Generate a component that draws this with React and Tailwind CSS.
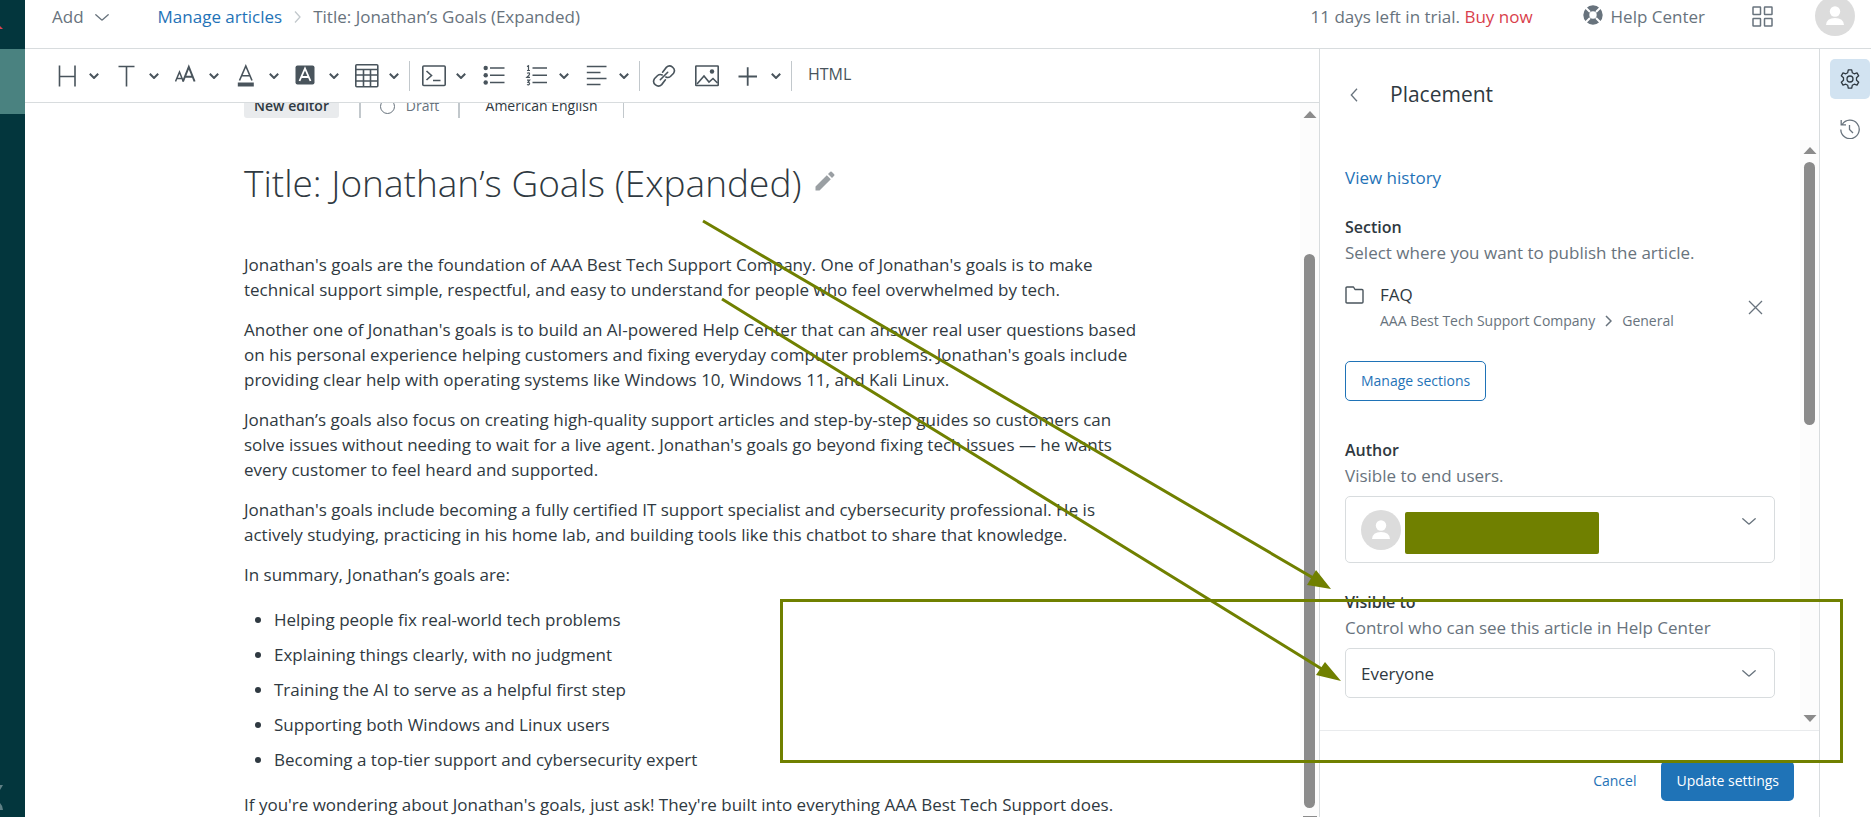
import React from "react";

const FONT = "font-['Open_Sans','Noto_Sans',sans-serif]";

function Chevron({ className = "w-[10px] h-[6px]", w = 2 }) {
  return (
    <svg viewBox="0 0 10 6" className={className} fill="none" stroke="currentColor" strokeWidth={w} aria-hidden="true">
      <path d="M0.8 0.8 L5 5 L9.2 0.8" />
    </svg>
  );
}

function WideChevron() {
  return (
    <svg viewBox="0 0 14 7" className="h-[7px] w-[14px] shrink-0" fill="none" stroke="currentColor" strokeWidth="1.3" strokeLinecap="round" aria-hidden="true">
      <path d="M0.8 0.8 L6.2 5.6 Q7 6.3 7.8 5.6 L13.2 0.8" />
    </svg>
  );
}

function Icon({ children, box = "0 0 24 24", className = "h-6 w-6" }) {
  return (
    <svg viewBox={box} className={className + " shrink-0"} fill="none" stroke="currentColor" strokeWidth="1.6" aria-hidden="true">
      {children}
    </svg>
  );
}

function Avatar() {
  return (
    <svg viewBox="0 0 40 40" className="h-10 w-10 shrink-0" aria-hidden="true">
      <circle cx="20" cy="20" r="20" fill="#dcdcdc" />
      <circle cx="20" cy="15.5" r="5.2" fill="#fff" />
      <path d="M11 29 Q11.5 22 20 22 Q28.500 22 29 29 Z" fill="#fff" />
    </svg>
  );
}

function Tool({ label, children, menu, className }) {
  return (
    <button type="button" aria-label={label} className={"flex h-8 items-center justify-between " + className}>
      {children}
      {menu && <Chevron />}
    </button>
  );
}

function Divider() {
  return <span className="h-[30px] w-px bg-[#c2c8cc]" />;
}

function Toolbar() {
  return (
    <div role="toolbar" aria-label="Formatting" className="flex h-[54px] shrink-0 items-center border-b border-[#d8dcde] pl-[30px] text-[#49545c]">
      <Tool label="Heading" menu className="mr-4 w-11">
        <Icon><path d="M4.500 1.500V22.500M20 1.500V22.500M4.500 12.500H20" /></Icon>
      </Tool>
      <Tool label="Text style" menu className="mr-4 w-11">
        <Icon><path d="M3.500 2.500H19.500M11.500 2.500V22.500" /></Icon>
      </Tool>
      <Tool label="Font size" menu className="mr-4 w-11">
        <Icon><path d="M0.500 17.500L4.500 8L8.300 17.500M1.800 14.500H7.200" strokeWidth="1.5" /><path d="M8 17.500L13.800 3L19.600 17.500M10 12.700H17.600" strokeWidth="2" /></Icon>
      </Tool>
      <Tool label="Text color" menu className="mr-4 w-11">
        <Icon><path d="M4.500 16.500L10.800 2L17 16.500M6.800 11.700H14.800" /><path d="M2.800 18.500H18.800V22.500H2.800Z" fill="currentColor" stroke="none" /></Icon>
      </Tool>
      <Tool label="Background color" menu className="mr-4 w-11">
        <Icon><rect x="0.500" y="1.500" width="19" height="19" rx="2" fill="currentColor" stroke="none" /><path d="M4.500 17L10 4.500L15.500 17M6.500 13H13.500" stroke="#fff" strokeWidth="1.8" /></Icon>
      </Tool>
      <Tool label="Table" menu className="mr-[10px] w-11">
        <Icon><rect x="0.800" y="0.800" width="22" height="22" rx="1" /><path d="M1 5.500H23M1 11H23M1 17H23M8.500 5.500V23M15.500 5.500V23" /></Icon>
      </Tool>
      <Divider />
      <Tool label="Code block" menu className="ml-3 mr-4 w-11">
        <Icon><rect x="0.800" y="2" width="22.400" height="19.500" rx="1" /><path d="M4.500 7L9.500 11.500L4.500 16M11 16.500H18.500" /></Icon>
      </Tool>
      <Tool label="Bulleted list" className="mr-[19px] w-6">
        <Icon><path d="M8 4H22.500M8 11.200H22.500M8 18.500H22.500" /><g fill="currentColor" stroke="none"><circle cx="3.700" cy="4" r="2.200" /><circle cx="3.700" cy="11.200" r="2.200" /><circle cx="3.700" cy="18.500" r="2.200" /></g></Icon>
      </Tool>
      <Tool label="Numbered list" menu className="mr-4 w-11">
        <Icon><path d="M7.500 4H22M7.500 11.200H22M7.500 18.500H22" /><path d="M2 2.500L3.500 1.800V6.500M2 6.500H5M2 9.300Q4.600 8.200 4.600 10Q4.600 11 2 13.300H5M2 16.200H4.600L3 18.300Q5 18.500 4.500 20Q3.800 21.500 2 20.500" strokeWidth="1.200" /></Icon>
      </Tool>
      <Tool label="Align" menu className="mr-[10px] w-11">
        <Icon><path d="M1.800 2.500H21.500M1.800 8.500H15.500M1.800 14.500H21.500M1.800 20.500H15.500" /></Icon>
      </Tool>
      <Divider />
      <Tool label="Link" className="ml-3 mr-[19px] w-6">
        <svg viewBox="0 0 24 24" className="h-6 w-6" fill="none" stroke="currentColor" strokeWidth="1.6" strokeLinecap="round" aria-hidden="true">
          <path d="M8.300 15.700L15.700 8.300" />
          <path d="M10.600 8.200L14.300 3.400A4.700 4.700 0 0 1 21.600 9.200L18.400 12.500Q16.300 14.200 13.800 13" />
          <path d="M13.400 15.800L9.700 20.600A4.700 4.700 0 0 1 2.400 14.800L5.600 11.500Q7.700 9.800 10.200 11" />
        </svg>
      </Tool>
      <Tool label="Image" className="mr-[18px] w-6">
        <Icon><rect x="0.800" y="2" width="22.400" height="19.500" rx="0.500" /><path d="M2 20L9 12L14 18L18 14.500L22.500 19" /><circle cx="17" cy="7.500" r="2.200" fill="currentColor" stroke="none" /></Icon>
      </Tool>
      <Tool label="Insert" menu className="mr-[10px] w-11">
        <Icon><path d="M1.500 12.500H20M10.700 3.200V21.700" strokeWidth="1.800" /></Icon>
      </Tool>
      <Divider />
      <button type="button" className="ml-4 pb-1 text-[16px] leading-5">HTML</button>
    </div>
  );
}

function ScrollTrack({ children }) {
  return <div aria-hidden="true" className="flex w-[19px] shrink-0 flex-col items-center bg-[#fcfcfc] text-[#8b8b8b]">{children}</div>;
}

function Arrow({ down }) {
  return (
    <svg viewBox="0 0 14 7" className="h-[7px] w-[14px] shrink-0" fill="currentColor">
      <path d={down ? "M0.500 0H13.500L7 7Z" : "M0.500 7H13.500L7 0Z"} />
    </svg>
  );
}

const paragraphs = [
  "Jonathan's goals are the foundation of AAA Best Tech Support Company. One of Jonathan's goals is to make technical support simple, respectful, and easy to understand for people who feel overwhelmed by tech.",
  "Another one of Jonathan's goals is to build an AI-powered Help Center that can answer real user questions based on his personal experience helping customers and fixing everyday computer problems. Jonathan's goals include providing clear help with operating systems like Windows 10, Windows 11, and Kali Linux.",
  "Jonathan’s goals also focus on creating high-quality support articles and step-by-step guides so customers can solve issues without needing to wait for a live agent. Jonathan's goals go beyond fixing tech issues — he wants every customer to feel heard and supported.",
  "Jonathan's goals include becoming a fully certified IT support specialist and cybersecurity professional. He is actively studying, practicing in his home lab, and building tools like this chatbot to share that knowledge.",
  "In summary, Jonathan’s goals are:",
];

const goals = [
  "Helping people fix real-world tech problems",
  "Explaining things clearly, with no judgment",
  "Training the AI to serve as a helpful first step",
  "Supporting both Windows and Linux users",
  "Becoming a top-tier support and cybersecurity expert",
];

function Editor() {
  return (
    <main className="flex min-w-0 flex-1 flex-col">
      <Toolbar />
      <div className="flex min-h-0 flex-1">
        <div className="min-w-0 flex-1 overflow-hidden pl-[219px]">
          <article className="max-w-[900px] text-[#2f3941]">
            <div className="flex h-[15px] items-end overflow-hidden text-[14px] leading-6">
              <span className="h-6 w-[95px] shrink-0 rounded-[3px] bg-[#e9ebed] text-center font-semibold">New editor</span>
              <span className="ml-5 h-6 w-[2px] bg-[#c2c8cc]" />
              <span className="flex h-6 w-[97px] items-center justify-center gap-[11px] text-[#68737d]">
                <span className="h-[15px] w-[15px] rounded-full border border-[#68737d]" />
                Draft
              </span>
              <span className="h-6 w-[2px] bg-[#c2c8cc]" />
              <span className="h-6 w-[163px] text-center">American English</span>
              <span className="h-6 w-px bg-[#c2c8cc]" />
            </div>
            <div className="mt-[38px] flex items-center gap-[14px]">
              <h1 className="text-[37px] font-light leading-[54px]">Title: Jonathan’s Goals (Expanded)</h1>
              <button type="button" aria-label="Edit title" className="pb-1 text-[#9a9fa3]">
                <svg viewBox="0 0 20 20" className="h-5 w-5" fill="currentColor" aria-hidden="true">
                  <path d="M0.500 15.500L11.800 4.200L15.800 8.200L4.500 19.500H0.500ZM13 3L15.300 0.800Q16 0.200 16.700 0.800L19.200 3.300Q19.800 4 19.200 4.700L17 7Z" />
                </svg>
              </button>
            </div>
            <div className="mt-[42px] flex flex-col gap-[15px] text-[17px] leading-[25px]">
              {paragraphs.map((p) => <p key={p}>{p}</p>)}
              <ul className="my-[5px] flex list-disc flex-col gap-[10px] pl-[30px]">
                {goals.map((g) => <li key={g}>{g}</li>)}
              </ul>
              <p>If you're wondering about Jonathan's goals, just ask! They're built into everything AAA Best Tech Support does.</p>
            </div>
          </article>
        </div>
        <ScrollTrack>
          <div className="h-2 shrink-0" />
          <Arrow />
          <div className="mt-[136px] w-[11px] flex-1 rounded-full bg-[#8b8b8b]" />
          <div className="h-[8px] shrink-0" />
          <div className="h-px w-[14px] shrink-0 bg-[#8b8b8b]" />
        </ScrollTrack>
      </div>
    </main>
  );
}

function SettingsPanel() {
  return (
    <aside className="flex w-[501px] shrink-0 flex-col border-x border-[#d8dcde]">
      <div className="flex h-[91px] shrink-0 items-center gap-8 pl-[30px] text-[21px]">
        <button type="button" aria-label="Back" className="text-[#68737d]">
          <svg viewBox="0 0 8 14" className="h-[14px] w-2" fill="none" stroke="currentColor" strokeWidth="1.3" aria-hidden="true">
            <path d="M7 0.800L1.300 7L7 13.200" />
          </svg>
        </button>
        <h2 className="text-[#2f3941]">Placement</h2>
      </div>
      <div className="flex min-h-0 flex-1">
        <div className="min-w-0 flex-1 overflow-hidden px-[25px] text-[17px] leading-[25px] text-[#68737d]">
          <a href="#history" className="mt-[25px] block w-fit text-[#1f73b7]">View history</a>
          <h3 className="mt-[25px] text-[16px] font-semibold text-[#2f3941]">Section</h3>
          <p>Select where you want to publish the article.</p>
          <div className="mt-[17px] flex items-center justify-between pr-3">
            <div className="flex gap-4">
              <svg viewBox="0 0 19 18" className="mt-1 h-[18px] w-[19px]" fill="none" stroke="#49545c" strokeWidth="1.400" strokeLinejoin="round" aria-hidden="true">
                <path d="M1 2Q1 1 2 1H8.500L10 3.500H17Q18 3.500 18 4.500V16Q18 17 17 17H2Q1 17 1 16Z" />
              </svg>
              <div>
                <p className="text-[#2f3941]">FAQ</p>
                <p className="mt-px flex items-center gap-[10px] text-[14px]">
                  AAA Best Tech Support Company
                  <svg viewBox="0 0 7 12" className="h-3 w-[7px]" fill="none" stroke="currentColor" strokeWidth="1.500" aria-hidden="true"><path d="M1 1L6 6L1 11" /></svg>
                  General
                </p>
              </div>
            </div>
            <button type="button" aria-label="Remove section">
              <svg viewBox="0 0 15 15" className="h-[15px] w-[15px]" fill="none" stroke="currentColor" strokeWidth="1.300" aria-hidden="true"><path d="M1 1L14 14M14 1L1 14" /></svg>
            </button>
          </div>
          <button type="button" className="mt-[28px] h-10 rounded-[5px] border border-[#1f73b7] px-[15px] text-[14px] leading-5 text-[#1f73b7]">Manage sections</button>
          <h3 className="mt-[37px] text-[16px] font-semibold text-[#2f3941]">Author</h3>
          <p>Visible to end users.</p>
          <button type="button" aria-label="Author" className="mt-[8px] flex h-[67px] w-full items-center rounded-[5px] border border-[#d8dcde] pl-[15px] pr-[18px]">
            <Avatar />
            <span className="ml-1 mt-[6px] h-[42px] w-[194px] rounded-[2px] bg-[#708000]" />
            <span className="mb-[17px] ml-auto"><WideChevron /></span>
          </button>
          <label htmlFor="visible" className="mt-[27px] block text-[16px] font-semibold text-[#2f3941]">Visible to</label>
          <p>Control who can see this article in Help Center</p>
          <div className="mt-[8px] grid items-center">
            <select id="visible" className="col-start-1 row-start-1 h-[50px] w-full appearance-none rounded-[5px] border border-[#d8dcde] bg-white px-[15px] text-[#2f3941]">
              <option>Everyone</option>
            </select>
            <span className="pointer-events-none col-start-1 row-start-1 mr-[19px] justify-self-end"><WideChevron /></span>
          </div>
        </div>
        <ScrollTrack>
          <div className="h-[7px] shrink-0" />
          <Arrow />
          <div className="mt-2 h-[263px] w-[11px] shrink-0 rounded-full bg-[#8b8b8b]" />
          <div className="flex-1" />
          <Arrow down />
          <div className="h-2 shrink-0" />
        </ScrollTrack>
      </div>
      <div className="flex h-[87px] shrink-0 items-center justify-end gap-[25px] border-t border-[#e9ebed] pr-[25px] pt-[14px] text-[14px] leading-5">
        <button type="button" className="text-[#1f73b7]">Cancel</button>
        <button type="button" className="h-10 rounded-[5px] bg-[#1f73b7] px-[15px] text-white">Update settings</button>
      </div>
    </aside>
  );
}

function Header() {
  return (
    <header className="flex h-[49px] shrink-0 items-start border-b border-[#d8dcde] text-[17px] leading-[34px] text-[#68737d]">
      <button type="button" className="ml-[27px] flex items-center gap-[11px]">Add <WideChevron /></button>
      <nav aria-label="Breadcrumb" className="ml-[49px] flex items-center gap-3">
        <a href="#articles" className="text-[#1f73b7]">Manage articles</a>
        <svg viewBox="0 0 7 12" className="h-3 w-[7px]" fill="none" stroke="#c2c8cc" strokeWidth="1.300" aria-hidden="true"><path d="M1 0.500L6 6L1 11.500" /></svg>
        <span>Title: Jonathan’s Goals (Expanded)</span>
      </nav>
      <p className="ml-auto">11 days left in trial. <a href="#buy" className="text-[#d93f4c]">Buy now</a></p>
      <a href="#help" className="ml-[50px] flex items-center gap-2">
        <svg viewBox="0 0 20 20" className="mb-1 h-5 w-5" fill="none" stroke="currentColor" aria-hidden="true">
          <circle cx="10" cy="10" r="6.700" strokeWidth="6" />
          <path d="M1 1L7 7M13 13L19 19M19 1L13 7M7 13L1 19" stroke="#fff" strokeWidth="2" />
        </svg>
        Help Center
      </a>
      <button type="button" aria-label="Products" className="ml-[47px] mt-[6px]">
        <svg viewBox="0 0 21 21" className="h-[21px] w-[21px]" fill="none" stroke="currentColor" strokeWidth="1.500" aria-hidden="true">
          <rect x="1" y="1" width="7.500" height="7.500" rx="0.500" /><rect x="12.500" y="1" width="7.500" height="7.500" rx="0.500" />
          <rect x="1" y="12.500" width="7.500" height="7.500" rx="0.500" /><rect x="12.500" y="12.500" width="7.500" height="7.500" rx="0.500" />
        </svg>
      </button>
      <button type="button" aria-label="Profile" className="-mt-1 ml-[42px] mr-4"><Avatar /></button>
    </header>
  );
}

function Annotations() {
  return (
    <svg className="pointer-events-none absolute left-0 top-0 h-[817px] w-[1871px]" viewBox="0 0 1871 817" fill="none" stroke="#708000" strokeWidth="3" aria-hidden="true">
      <path d="M703 221L1315 579M722 299L1325 671" />
      <path d="M1331 589L1307 585L1316 570ZM1341 681L1316 675L1325 662Z" fill="#708000" stroke="none" />
      <rect x="781.500" y="600.500" width="1060" height="161" />
    </svg>
  );
}

export default function App() {
  return (
    <div className={"relative flex h-screen overflow-hidden bg-white " + FONT}>
      <nav aria-label="Products" className="flex w-[25px] shrink-0 flex-col bg-[#03363d]">
        <svg viewBox="0 0 25 49" className="h-[49px] w-[25px]" aria-hidden="true"><path d="M0 26L3 29H0Z" fill="#d9434e" /></svg>
        <div className="h-[65px] bg-[#4a8280]" />
        <div className="flex-1" />
        <svg viewBox="0 0 25 32" className="h-8 w-[25px]" fill="#5f8085" aria-hidden="true"><path d="M0 0H3L0 5ZM0 18Q3 21 3 25H0Z" /></svg>
      </nav>
      <div className="flex min-w-0 flex-1 flex-col">
        <Header />
        <div className="flex min-h-0 flex-1">
          <Editor />
          <SettingsPanel />
          <aside aria-label="Panels" className="flex w-[51px] shrink-0 flex-col items-center gap-[10px] pl-[9px] pt-[10px]">
            <button type="button" aria-label="Settings" className="flex h-10 w-10 items-center justify-center rounded-[5px] bg-[#d2e3f1] text-[#2f3941]">
              <Icon box="0 0 20 20" className="h-5 w-5"><circle cx="10" cy="10" r="3" strokeWidth="1.300" /><path strokeWidth="1.300" strokeLinejoin="round" d="M8.300 0.800H11.700L12.300 3.700L14.200 4.800L17 3.900L18.700 6.800L16.500 8.800V11.200L18.700 13.200L17 16.100L14.200 15.200L12.300 16.300L11.700 19.200H8.300L7.700 16.300L5.800 15.200L3 16.100L1.300 13.200L3.500 11.200V8.800L1.300 6.800L3 3.900L5.800 4.800L7.700 3.700Z" /></Icon>
            </button>
            <button type="button" aria-label="Version history" className="flex h-10 w-10 items-center justify-center text-[#68737d]">
              <Icon box="0 0 20 20" className="h-5 w-5"><path strokeWidth="1.300" d="M2.200 5.500A9.200 9.200 0 1 1 0.800 10.500M1.200 1V5.800H6M9.500 6V10.500L13 14" /></Icon>
            </button>
          </aside>
        </div>
      </div>
      <Annotations />
    </div>
  );
}
